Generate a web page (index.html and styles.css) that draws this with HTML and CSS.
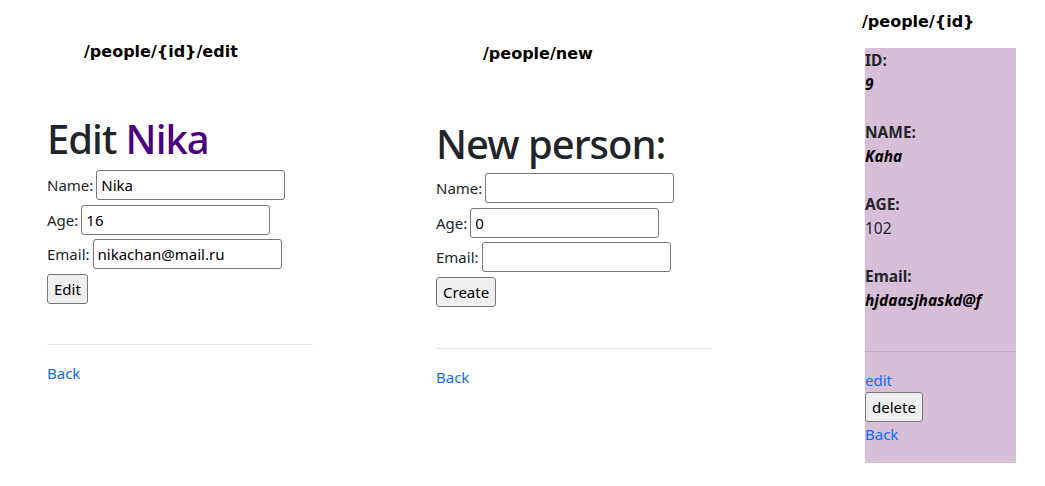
FILE: index.html
```html
<!DOCTYPE html>
<html lang="en">
<head>
<meta charset="utf-8">
<title>People</title>
<link rel="stylesheet" href="styles.css">
</head>
<body>
<div class="page">
  <section class="col col-edit">
    <h3 class="path path-edit">/people/{id}/edit</h3>
    <h1 class="title title-edit">Edit <span class="name">Nika</span></h1>
    <form class="form form-edit">
      <div class="row"><label class="label">Name:</label><input class="field" type="text" value="Nika"></div>
      <div class="row"><label class="label">Age:</label><input class="field" type="text" value="16"></div>
      <div class="row"><label class="label">Email:</label><input class="field" type="text" value="nikachan@mail.ru"></div>
      <div class="row"><button class="btn" type="button">Edit</button></div>
    </form>
    <hr class="rule rule-edit">
    <a class="link" href="#">Back</a>
  </section>

  <section class="col col-new">
    <h3 class="path path-new">/people/new</h3>
    <h1 class="title title-new">New person:</h1>
    <form class="form form-new">
      <div class="row"><label class="label">Name:</label><input class="field" type="text" value=""></div>
      <div class="row"><label class="label">Age:</label><input class="field" type="text" value="0"></div>
      <div class="row"><label class="label">Email:</label><input class="field" type="text" value=""></div>
      <div class="row"><button class="btn" type="button">Create</button></div>
    </form>
    <hr class="rule rule-new">
    <a class="link" href="#">Back</a>
  </section>

  <section class="col col-show">
    <h3 class="path path-show">/people/{id}</h3>
    <div class="panel">
      <div class="entry"><b class="key">ID:</b><b class="val"><i>9</i></b></div>
      <div class="entry"><b class="key">NAME:</b><b class="val"><i>Kaha</i></b></div>
      <div class="entry"><b class="key">AGE:</b><span class="val plain">102</span></div>
      <div class="entry"><b class="key">Email:</b><b class="val"><i>hjdaasjhaskd@f</i></b></div>
      <hr class="rule rule-panel">
      <a class="link" href="#">edit</a>
      <div><button class="btn" type="button">delete</button></div>
      <a class="link" href="#">Back</a>
    </div>
  </section>
</div>
</body>
</html>
```

FILE: styles.css
```css
* { box-sizing: border-box; }

html, body {
  margin: 0;
  padding: 0;
  background: #ffffff;
}

body {
  font-family: "Noto Sans", "Open Sans", sans-serif;
  font-size: 15px;
  line-height: 24px;
  color: #212529;
}

.page {
  display: flex;
  align-items: flex-start;
}

.col {
  display: flex;
  flex-direction: column;
  align-items: flex-start;
}

.col-edit {
  margin-left: 47px;
  width: 266px;
  padding-top: 40px;
}

.col-new {
  margin-left: 123px;
  width: 276px;
  padding-top: 42px;
}

.col-show {
  margin-left: 150px;
  padding-top: 10px;
}

.path {
  margin: 0;
  font-family: "DejaVu Sans", sans-serif;
  font-weight: bold;
  font-size: 16px;
  line-height: 24px;
  color: #000000;
}

.path-edit { padding-left: 37px; }
.path-new { padding-left: 47px; }
.path-show { padding-left: 0; }

.title {
  margin: 0;
  font-size: 40px;
  line-height: 48px;
  font-weight: 500;
  letter-spacing: -1px;
  color: #212529;
}

.title-edit { margin-top: 51px; }
.title-new { margin-top: 54px; }

.name { color: #4b0082; }

.form {
  display: flex;
  flex-direction: column;
  gap: 4.5px;
}

.form-edit { margin-top: 7px; }
.form-new { margin-top: 5px; }

.row {
  display: flex;
  align-items: center;
  gap: 3px;
}

.label {
  font-size: 15px;
}

.field {
  width: 189px;
  height: 30px;
  padding: 0 4px;
  border: 1px solid #767676;
  border-radius: 3px;
  font-family: inherit;
  font-size: 15px;
  color: #000000;
  background: #ffffff;
}

.btn {
  height: 30px;
  padding: 0 6px;
  border: 1px solid #767676;
  border-radius: 3px;
  background: #efefef;
  font-family: inherit;
  font-size: 15px;
  line-height: 24px;
  color: #000000;
}

.rule {
  align-self: stretch;
  margin: 0;
  border: 0;
  border-top: 1px solid rgba(0, 0, 0, 0.1);
  height: 0;
}

.rule-edit { margin-top: 40px; margin-bottom: 16px; }
.rule-new { margin-top: 41px; margin-bottom: 16px; }
.rule-panel { margin: 15px 0 16px; }

.link {
  color: #0d6efd;
  text-decoration: none;
  font-size: 15px;
  line-height: 24px;
}

.panel {
  margin-top: 14px;
  margin-left: 3px;
  width: 151px;
  height: 415px;
  background: #d8bfd8;
  display: flex;
  flex-direction: column;
  align-items: flex-start;
}

.entry {
  display: flex;
  flex-direction: column;
  padding-bottom: 24px;
  line-height: 24px;
}

.key {
  font-weight: bold;
  font-size: 15.5px;
  color: #212529;
}

.val {
  font-weight: bold;
  font-size: 15.5px;
  color: #000000;
}

.val.plain {
  font-weight: normal;
  color: #212529;
}
```
